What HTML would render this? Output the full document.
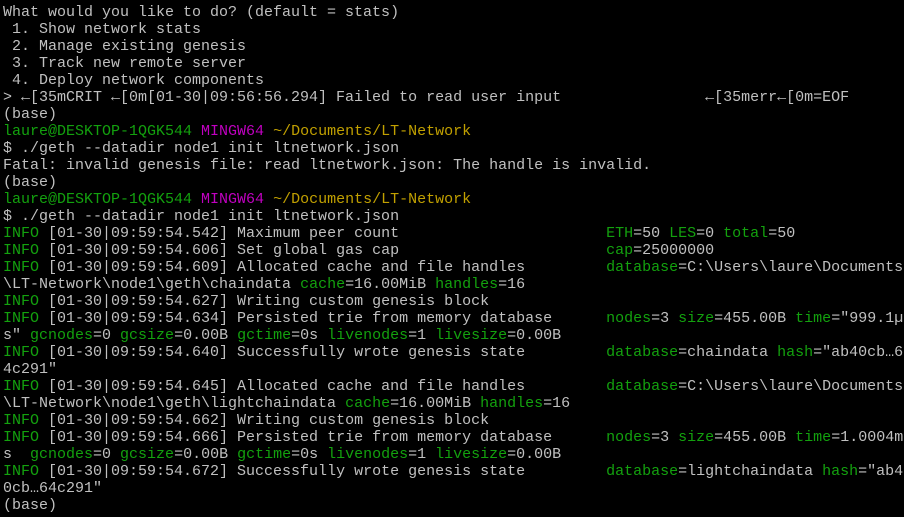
<!DOCTYPE html>
<html><head><meta charset="utf-8"><style>
html,body{margin:0;padding:0;background:#000;width:904px;height:517px;overflow:hidden}
pre{margin:0;padding:4px 0 0 3px;font-family:"Liberation Mono",monospace;font-size:15px;line-height:17px;color:#c0c0c0;white-space:pre;letter-spacing:0}
.g{color:#16c60c}.G{color:#13a10e}.m{color:#c000c0}.y{color:#c1a000}
</style></head><body><pre>What would you like to do? (default = stats)
 1. Show network stats
 2. Manage existing genesis
 3. Track new remote server
 4. Deploy network components
&gt; ←[35mCRIT ←[0m[01-30|09:56:56.294] Failed to read user input                ←[35merr←[0m=EOF
(base)
<span class="G">laure@DESKTOP-1QGK544</span> <span class="m">MINGW64</span> <span class="y">~/Documents/LT-Network</span>
$ ./geth --datadir node1 init ltnetwork.json
Fatal: invalid genesis file: read ltnetwork.json: The handle is invalid.
(base)
<span class="G">laure@DESKTOP-1QGK544</span> <span class="m">MINGW64</span> <span class="y">~/Documents/LT-Network</span>
$ ./geth --datadir node1 init ltnetwork.json
<span class="G">INFO</span> [01-30|09:59:54.542] Maximum peer count                       <span class="G">ETH</span>=50 <span class="G">LES</span>=0 <span class="G">total</span>=50
<span class="G">INFO</span> [01-30|09:59:54.606] Set global gas cap                       <span class="G">cap</span>=25000000
<span class="G">INFO</span> [01-30|09:59:54.609] Allocated cache and file handles         <span class="G">database</span>=C:\Users\laure\Documents
\LT-Network\node1\geth\chaindata <span class="G">cache</span>=16.00MiB <span class="G">handles</span>=16
<span class="G">INFO</span> [01-30|09:59:54.627] Writing custom genesis block
<span class="G">INFO</span> [01-30|09:59:54.634] Persisted trie from memory database      <span class="G">nodes</span>=3 <span class="G">size</span>=455.00B <span class="G">time</span>="999.1µ
s" <span class="G">gcnodes</span>=0 <span class="G">gcsize</span>=0.00B <span class="G">gctime</span>=0s <span class="G">livenodes</span>=1 <span class="G">livesize</span>=0.00B
<span class="G">INFO</span> [01-30|09:59:54.640] Successfully wrote genesis state         <span class="G">database</span>=chaindata <span class="G">hash</span>="ab40cb…6
4c291"
<span class="G">INFO</span> [01-30|09:59:54.645] Allocated cache and file handles         <span class="G">database</span>=C:\Users\laure\Documents
\LT-Network\node1\geth\lightchaindata <span class="G">cache</span>=16.00MiB <span class="G">handles</span>=16
<span class="G">INFO</span> [01-30|09:59:54.662] Writing custom genesis block
<span class="G">INFO</span> [01-30|09:59:54.666] Persisted trie from memory database      <span class="G">nodes</span>=3 <span class="G">size</span>=455.00B <span class="G">time</span>=1.0004m
s  <span class="G">gcnodes</span>=0 <span class="G">gcsize</span>=0.00B <span class="G">gctime</span>=0s <span class="G">livenodes</span>=1 <span class="G">livesize</span>=0.00B
<span class="G">INFO</span> [01-30|09:59:54.672] Successfully wrote genesis state         <span class="G">database</span>=lightchaindata <span class="G">hash</span>="ab4
0cb…64c291"
(base)
</pre></body></html>
